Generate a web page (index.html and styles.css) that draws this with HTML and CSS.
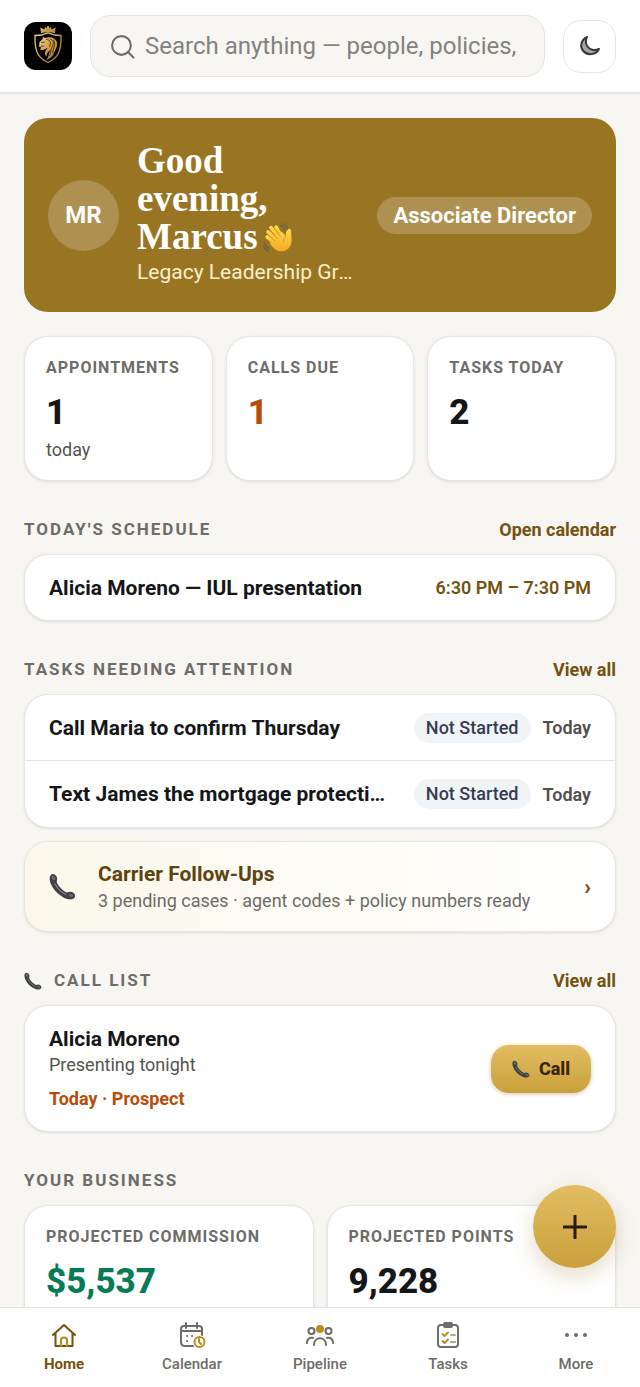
FILE: index.html
```html
<!DOCTYPE html>
<html lang="en">
<head>
    <meta charset="UTF-8">
    <meta name="viewport" content="width=device-width, initial-scale=1.0">
    <title>Home</title>
    <link rel="stylesheet" href="styles.css">
</head>
<body>
    <!-- Shared icons -->
    <svg class="defs" aria-hidden="true">
        <defs>
            <linearGradient id="gold" x1="0" y1="0" x2="1" y2="1">
                <stop offset="0" stop-color="#f3d68b"/>
                <stop offset="0.5" stop-color="#cf9c45"/>
                <stop offset="1" stop-color="#a87527"/>
            </linearGradient>
            <linearGradient id="hand" x1="0" y1="0" x2="0" y2="1">
                <stop offset="0" stop-color="#ffd84c"/>
                <stop offset="1" stop-color="#f4aa24"/>
            </linearGradient>
        </defs>
        <symbol id="phone" viewBox="0 0 28 28">
            <path d="M2.500 1.500C4.500 .3 7.500 2 8.300 4.800C8.900 7 7.800 8.200 8 9.500C9.200 13 14 18 18 20C19.500 20.700 20.500 19.200 22.500 19.500C25.500 19.800 27.600 22.500 27 24.500C26.300 26.800 22.500 27.900 19 27C11 24.500 2.800 16 1 8.500C.4 5.500 .6 2.800 2.500 1.500Z" fill="#3f4145"/>
            <path d="M3.200 3.200C4.500 2.600 6.200 4 6.600 5.600C6.800 7 6 7.500 5 7.200C3.300 6.700 2 4.300 3.200 3.200Z" fill="#6d7074"/>
            <path d="M6.200 11.500C9 16.500 13 20.200 17.200 22.300" fill="none" stroke="#85888b" stroke-width="1.200" stroke-linecap="round"/>
            <path d="M20.500 22.500C22.500 20.800 25 22 25.400 23.800C24.500 25.600 21.500 25.500 20.500 22.500Z" fill="#65686c"/>
        </symbol>
    </svg>

    <!-- Top Bar -->
    <header class="topbar">
        <a href="#" class="logo" aria-label="Home">
            <svg viewBox="0 0 48 48">
                <path d="M17 10.500L16.300 5.500L20.300 7.500L21.500 4.800L24 8L26.500 4.800L27.700 7.500L31.700 5.500L31 10.500C27 9.300 21 9.300 17 10.500Z" fill="url(#gold)"/>
                <path d="M24 8.500L22.800 5.500L24 3.500L25.200 5.500Z" fill="#e8bd62"/>
                <path d="M17 10.500C21 9.500 27 9.500 31 10.500" fill="none" stroke="#f3d68b" stroke-width="0.800"/>
                <path d="M24 40.500C15 36.500 10.500 31 11 13.500C15.500 13.500 19.500 12.800 24 10.800C28.500 12.800 32.500 13.500 37 13.500C37.500 31 33 36.500 24 40.500Z" fill="none" stroke="url(#gold)" stroke-width="1.300"/>
                <path d="M15.500 20L18.500 17.200L19 15L21.500 16C26 14 31 16 32.700 19.500C34.300 24 31.500 27 30.500 30C29.500 33.500 26.500 36.500 22.500 38C25.500 33.500 24.500 31 26.500 28C24 29.500 22.500 31.500 22.500 34.500C19.500 31.500 21.500 28.500 23.500 26C21 26.500 20 28.500 18.500 28L16 27.500L17.200 25.500L15 24.500Z" fill="url(#gold)"/>
                <path d="M17.500 20.500L20.500 20M17 24.200L20 24M22.500 17.500C26.500 17.500 27.500 21 25.500 24.500M26 17C30.500 18.500 29.800 22.500 27.500 26C26 28.500 27.500 31 25.500 34M29.500 18C32.500 22.500 28.500 26 28.800 31" fill="none" stroke="#1b1206" stroke-width="0.700" stroke-linecap="round"/>
            </svg>
        </a>
        <label class="search">
            <svg viewBox="0 0 24 24"><circle cx="11" cy="11" r="9"/><path d="M17.500 17.500L22.500 22.500"/></svg>
            <input type="text" class="search-input" aria-label="Search" placeholder="Search anything — people, policies,">
        </label>
        <button class="theme-btn" aria-label="Dark mode">
            <svg viewBox="0 0 22 22"><path d="M8 2C2 5 .5 11.500 4.300 16C8.500 21 17 20 20 14C15.500 16 10.500 14.800 8.300 11.300C6.500 8.300 6.500 5 8 2Z"/></svg>
        </button>
    </header>

    <!-- Main Content -->
    <main class="content">
        <section class="hero">
            <div class="avatar">MR</div>
            <div class="hero-text">
                <h1>Good<br>evening,<br>Marcus
                    <svg class="wave" viewBox="0 0 32 32" aria-label="waving hand">
                        <g fill="none" stroke="url(#hand)" stroke-width="4" stroke-linecap="round">
                            <path d="M15 19L5.500 9.500"/>
                            <path d="M18 17L8.500 5"/>
                            <path d="M20 15L14 4.500"/>
                            <path d="M13 22L4.500 15"/>
                        </g>
                        <path d="M9 16L20 9L24.500 14C24 11 25 6.500 28 6C31 6 29.800 11.500 30.500 17C31 23 28 28.500 22 30C16 31 12 28 7.500 22Z" fill="url(#hand)"/>
                        <path d="M15.500 17L8 8.500M18.500 14.500L12.500 6M13 19.500L6.500 13.500M24.500 14C22.500 15.500 21.500 18 22 20.500" fill="none" stroke="#d98b16" stroke-width="0.900" stroke-linecap="round"/>
                        <path d="M18.500 2.500C21 3 22.500 5 23 7.500M21 .8C24 1.800 25.700 4 26 6.500M1.500 21C2 24 4 26 6.500 27M.5 24.500C1.500 27.500 3.500 29 6 29.500" fill="none" stroke="#635f50" stroke-width="1.300" stroke-linecap="round"/>
                    </svg>
                </h1>
                <p>Legacy Leadership Group</p>
            </div>
            <span class="role">Associate Director</span>
        </section>

        <section class="stats">
            <div class="card stat">
                <h3>Appointments</h3>
                <div class="value">1</div>
                <div class="note">today</div>
            </div>
            <div class="card stat">
                <h3>Calls due</h3>
                <div class="value orange">1</div>
            </div>
            <div class="card stat">
                <h3>Tasks today</h3>
                <div class="value">2</div>
            </div>
        </section>

        <div class="section-head">
            <h2>Today's schedule</h2>
            <a href="#">Open calendar</a>
        </div>
        <div class="card">
            <div class="row">
                <span class="row-title">Alicia Moreno — IUL presentation</span>
                <span class="time">6:30 PM – 7:30 PM</span>
            </div>
        </div>

        <div class="section-head">
            <h2>Tasks needing attention</h2>
            <a href="#">View all</a>
        </div>
        <div class="card">
            <div class="row">
                <span class="row-title">Call Maria to confirm Thursday</span>
                <span class="status">Not Started</span>
                <span class="due">Today</span>
            </div>
            <div class="row">
                <span class="row-title">Text James the mortgage protection</span>
                <span class="status">Not Started</span>
                <span class="due">Today</span>
            </div>
        </div>
        <a href="#" class="card carrier">
            <svg class="phone-lg"><use href="#phone"/></svg>
            <span class="carrier-text">
                <strong>Carrier Follow-Ups</strong>
                <span>3 pending cases · agent codes + policy numbers ready</span>
            </span>
            <span class="arrow">›</span>
        </a>

        <div class="section-head">
            <h2><svg class="phone-sm"><use href="#phone"/></svg>Call list</h2>
            <a href="#">View all</a>
        </div>
        <div class="card call">
            <div class="call-text">
                <div class="row-title">Alicia Moreno</div>
                <div class="note">Presenting tonight</div>
                <div class="when">Today · Prospect</div>
            </div>
            <button class="call-btn"><svg class="phone-sm"><use href="#phone"/></svg>Call</button>
        </div>

        <div class="section-head">
            <h2>Your business</h2>
        </div>
        <section class="business">
            <div class="card stat">
                <h3>Projected commission</h3>
                <div class="value green">$5,537</div>
            </div>
            <div class="card stat">
                <h3>Projected points</h3>
                <div class="value">9,228</div>
            </div>
        </section>
    </main>

    <button class="fab" aria-label="Add">
        <svg viewBox="0 0 24 24"><path d="M12 1V23M1 12H23"/></svg>
    </button>

    <!-- Bottom Nav -->
    <nav class="tabs">
        <a href="#" class="active">
            <svg viewBox="0 0 28 28"><path d="M3 14L14 4L25 14M5.500 12V25H22.500V12"/><path class="accent" d="M11 25V19C11 15.500 17 15.500 17 19V25"/></svg>
            Home
        </a>
        <a href="#">
            <svg viewBox="0 0 28 28"><path d="M15 25H7C4 25 3 24 3 21V8C3 6 4 5 6 5H21C23 5 24 6 24 8V14M3 10H24M8 2V7M19 2V7"/><path d="M9 15H9.100M14 15H14.100M9 20H9.100"/><circle class="accent" cx="21.500" cy="21" r="5"/><path class="accent" d="M21 18V21L23 23"/></svg>
            Calendar
        </a>
        <a href="#">
            <svg viewBox="0 0 28 28"><circle class="dot-gold" cx="14" cy="8" r="4"/><circle cx="5.500" cy="10" r="3"/><circle cx="22.500" cy="10" r="3"/><path d="M8 24C8 15 20 15 20 24M1 22C1 18 3.500 16 7 17M27 22C27 18 24.500 16 21 17"/></svg>
            Pipeline
        </a>
        <a href="#">
            <svg viewBox="0 0 28 28"><rect x="4" y="4" width="20" height="22" rx="3"/><rect class="clip" x="10" y="2" width="8" height="4" rx="1"/><path class="accent" d="M8.500 13L10.500 15L14 11.500M8.500 20L10.500 22L14 18.500"/><path class="thin" d="M17 14H21M17 21H21"/></svg>
            Tasks
        </a>
        <a href="#">
            <svg viewBox="0 0 28 28"><g class="dots"><circle cx="5" cy="14" r="2"/><circle cx="14" cy="14" r="2"/><circle cx="23" cy="14" r="2"/></g></svg>
            More
        </a>
    </nav>
</body>
</html>
```
FILE: styles.css
```css
* {
    box-sizing: border-box;
}
body {
    margin: 0;
    height: 100vh;
    display: flex;
    flex-direction: column;
    overflow: hidden;
    font-family: Roboto, "Liberation Sans", sans-serif;
    background-color: #f7f6f3;
    color: #151618;
}
h1, h2, h3, p {
    margin: 0;
}
a {
    text-decoration: none;
}
button {
    font-family: inherit;
    cursor: pointer;
}
svg {
    display: block;
    flex-shrink: 0;
}
.defs {
    position: absolute;
    width: 0;
    height: 0;
}

/* Top bar */
.topbar {
    display: flex;
    align-items: center;
    gap: 18px;
    padding: 15px 24px;
    background-color: #fff;
    border-bottom: 2px solid #e8e7e5;
}
.logo {
    width: 48px;
    height: 48px;
    flex-shrink: 0;
    border-radius: 12px;
    background-color: #020202;
}
.search {
    flex: 1;
    min-width: 0;
    height: 62px;
    display: flex;
    align-items: center;
    gap: 10px;
    padding: 0 19px;
    background-color: #f7f6f3;
    border: 1px solid #e3e4e1;
    border-radius: 20px;
}
.search svg {
    width: 25px;
    height: 25px;
    fill: none;
    stroke: #6d6c68;
    stroke-width: 2;
    stroke-linecap: round;
}
.search-input {
    flex: 1;
    min-width: 0;
    padding: 0;
    border: none;
    outline: none;
    background: none;
    font-family: inherit;
    font-size: 24px;
}
.search-input::placeholder {
    color: #83827e;
}
.theme-btn {
    width: 53px;
    height: 53px;
    display: flex;
    align-items: center;
    justify-content: center;
    padding: 0;
    background-color: #fff;
    border: 1px solid #e5e5e3;
    border-radius: 18px;
}
.theme-btn svg {
    width: 22px;
    height: 22px;
    fill: #a5a5a5;
    stroke: #383838;
    stroke-width: 2;
    stroke-linejoin: round;
}

/* Content */
.content {
    flex: 1;
    min-height: 0;
    overflow-y: auto;
    scrollbar-width: none;
    padding: 24px;
}
.hero {
    display: flex;
    align-items: center;
    gap: 18px;
    padding: 24px;
    background-color: #997422;
    border-radius: 24px;
    color: #fff;
}
.avatar {
    width: 71px;
    height: 71px;
    flex-shrink: 0;
    display: flex;
    align-items: center;
    justify-content: center;
    background-color: #ae9150;
    border-radius: 50%;
    font-size: 24px;
    font-weight: 700;
}
.hero-text {
    flex: 1;
    min-width: 0;
}
.hero h1 {
    font-family: "Liberation Serif", serif;
    font-size: 37px;
    line-height: 38px;
    font-weight: 700;
}
.hero p {
    overflow: hidden;
    text-overflow: ellipsis;
    white-space: nowrap;
    font-size: 21px;
    line-height: 32px;
    color: #fbf0c9;
}
.wave {
    display: inline-block;
    width: 30px;
    height: 30px;
    margin-left: -4px;
    vertical-align: -4px;
}
.role {
    padding: 0 16px;
    background-color: #ae9150;
    border-radius: 20px;
    font-size: 22px;
    line-height: 37px;
    font-weight: 700;
    white-space: nowrap;
}
.card {
    background-color: #fff;
    border: 1px solid #e6e5e3;
    border-radius: 24px;
    box-shadow: 0 1px 3px rgba(0, 0, 0, 0.1);
}
.stats {
    display: grid;
    grid-template-columns: repeat(3, 1fr);
    gap: 13px;
    margin-top: 24px;
}
.business {
    display: grid;
    grid-template-columns: repeat(2, 1fr);
    grid-auto-rows: 145px;
    gap: 13px;
}
.stat {
    padding: 18px 21px;
}
.stat h3 {
    font-size: 16px;
    line-height: 25px;
    font-weight: 700;
    letter-spacing: 1px;
    text-transform: uppercase;
    white-space: nowrap;
    color: #6d6c68;
}
.value {
    margin: 12px 0 4px;
    font-size: 35px;
    line-height: 42px;
    font-weight: 800;
}
.orange {
    color: #b84d0a;
}
.green {
    color: #087a55;
}
.note {
    font-size: 18px;
    line-height: 24px;
    color: #555450;
}
.section-head {
    display: flex;
    align-items: center;
    justify-content: space-between;
    margin: 36px 0 12px;
    line-height: 25px;
}
.section-head h2 {
    display: flex;
    align-items: center;
    gap: 12px;
    font-size: 17px;
    font-weight: 700;
    letter-spacing: 2px;
    text-transform: uppercase;
    color: #6d6c68;
}
.section-head a {
    font-size: 18px;
    font-weight: 700;
    color: #75520f;
}
.row {
    display: flex;
    align-items: center;
    gap: 12px;
    height: 65px;
    padding: 0 24px;
}
.row + .row {
    height: 67px;
    border-top: 1px solid #e3e3e1;
}
.row-title {
    flex: 1;
    overflow: hidden;
    text-overflow: ellipsis;
    white-space: nowrap;
    font-size: 21px;
    line-height: 28px;
    font-weight: 700;
}
.time {
    font-size: 18px;
    font-weight: 600;
    color: #75520f;
}
.status {
    margin-left: 10px;
    padding: 0 12px;
    background-color: #f1f4f7;
    border-radius: 16px;
    font-size: 18px;
    line-height: 30px;
    font-weight: 500;
    color: #343c52;
}
.due {
    font-size: 18px;
    font-weight: 600;
    color: #504f4b;
}
.carrier {
    display: flex;
    align-items: center;
    gap: 22px;
    margin-top: 13px;
    padding: 18px 24px;
    background-image: linear-gradient(90deg, #fbf8eb, #fff);
}
.phone-lg {
    width: 27px;
    height: 27px;
}
.phone-sm {
    width: 18px;
    height: 18px;
}
.carrier-text {
    flex: 1;
    display: flex;
    flex-direction: column;
    font-size: 18px;
    line-height: 25px;
    color: #6d6c68;
}
.carrier-text strong {
    font-size: 21px;
    line-height: 28px;
    color: #5f430f;
}
.arrow {
    font-size: 22px;
    font-weight: 900;
    color: #75520f;
}
.call {
    display: flex;
    align-items: center;
    padding: 19px 24px;
}
.call-text {
    flex: 1;
}
.when {
    margin-top: 9px;
    font-size: 18px;
    line-height: 26px;
    font-weight: 700;
    color: #b84d0a;
}
.call-btn {
    display: flex;
    align-items: center;
    gap: 9px;
    height: 48px;
    padding: 0 21px;
    background: linear-gradient(#e2bd62, #c9a03b);
    border: none;
    border-radius: 18px;
    box-shadow: 0 1px 4px rgba(153, 116, 34, 0.4);
    font-size: 18px;
    font-weight: 800;
    color: #352408;
}

/* Floating add button */
.fab {
    position: fixed;
    right: 24px;
    bottom: 119px;
    width: 83px;
    height: 83px;
    display: flex;
    align-items: center;
    justify-content: center;
    padding: 0;
    background: linear-gradient(#e2bd62, #c9a03b);
    border: none;
    border-radius: 50%;
    box-shadow: 0 8px 22px rgba(153, 116, 34, 0.25);
}
.fab svg {
    width: 24px;
    height: 24px;
    stroke: #271c08;
    stroke-width: 3;
    stroke-linecap: round;
}

/* Bottom nav */
.tabs {
    display: grid;
    grid-template-columns: repeat(5, 1fr);
    height: 80px;
    padding-top: 13px;
    background-color: #fff;
    border-top: 1px solid #e2e2e0;
}
.tabs a {
    display: flex;
    flex-direction: column;
    align-items: center;
    gap: 5px;
    font-size: 15px;
    line-height: 20px;
    font-weight: 500;
    color: #6d6c68;
}
.tabs svg {
    width: 28px;
    height: 28px;
    fill: none;
    stroke: #6d6c68;
    stroke-width: 2;
    stroke-linecap: round;
    stroke-linejoin: round;
}
.tabs .active {
    font-weight: 700;
    color: #75520f;
}
.tabs .active svg {
    stroke: #75520f;
}
.tabs .accent {
    stroke: #bd8b1c;
}
.tabs .dot-gold {
    fill: #bd8b1c;
    stroke: none;
}
.tabs .clip {
    fill: #6d6c68;
}
.tabs .thin {
    stroke: #aaa9a5;
}
.tabs .dots {
    fill: #6d6c68;
    stroke: none;
}
```
